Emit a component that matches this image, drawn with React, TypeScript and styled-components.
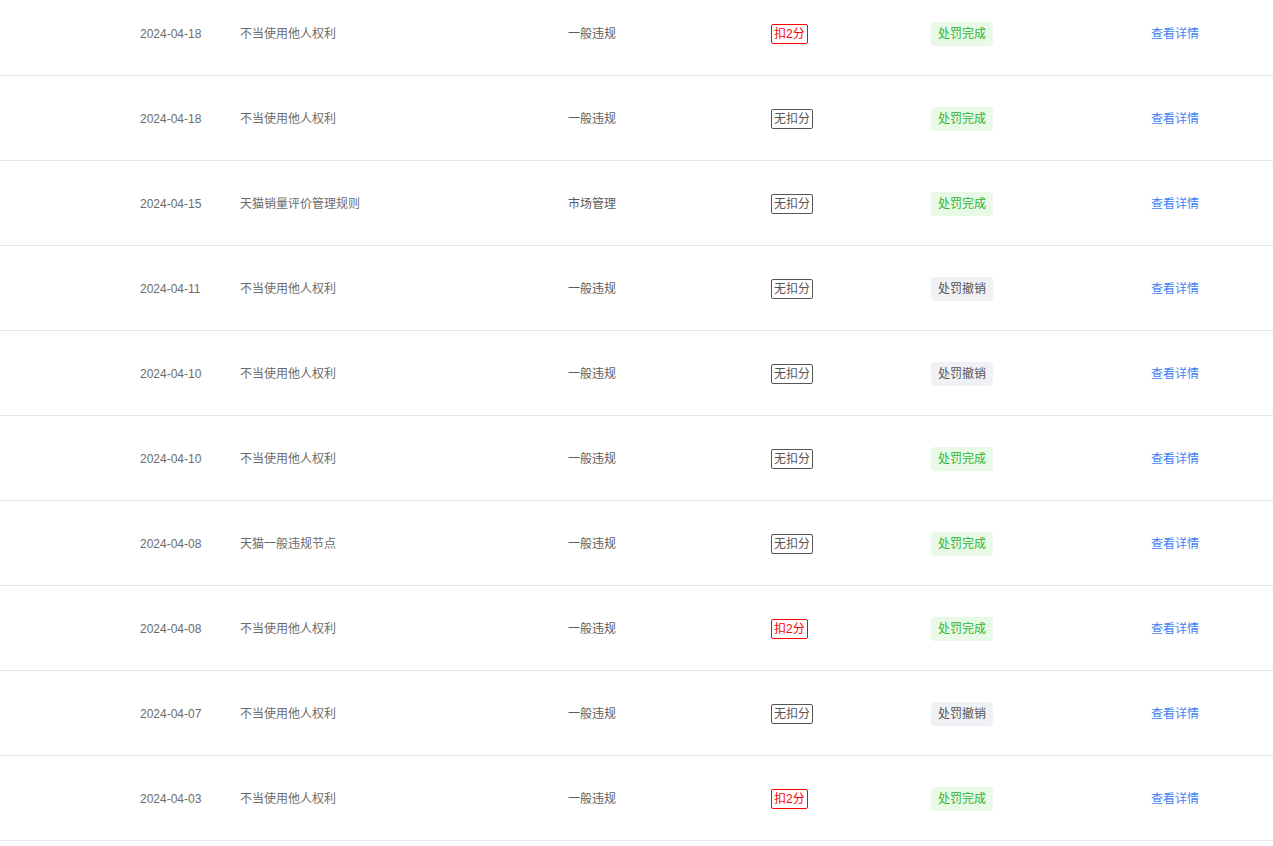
import styled, { createGlobalStyle } from "styled-components";

type Deduct = "none" | "two";
type Status = "done" | "revoked";

type RowT = {
  date: string;
  title: string;
  category: string;
  deduct: Deduct;
  status: Status;
};

const rows: Array<RowT> = [
  { date: "2024-04-18", title: "不当使用他人权利", category: "一般违规", deduct: "two", status: "done" },
  { date: "2024-04-18", title: "不当使用他人权利", category: "一般违规", deduct: "none", status: "done" },
  { date: "2024-04-15", title: "天猫销量评价管理规则", category: "市场管理", deduct: "none", status: "done" },
  { date: "2024-04-11", title: "不当使用他人权利", category: "一般违规", deduct: "none", status: "revoked" },
  { date: "2024-04-10", title: "不当使用他人权利", category: "一般违规", deduct: "none", status: "revoked" },
  { date: "2024-04-10", title: "不当使用他人权利", category: "一般违规", deduct: "none", status: "done" },
  { date: "2024-04-08", title: "天猫一般违规节点", category: "一般违规", deduct: "none", status: "done" },
  { date: "2024-04-08", title: "不当使用他人权利", category: "一般违规", deduct: "two", status: "done" },
  { date: "2024-04-07", title: "不当使用他人权利", category: "一般违规", deduct: "none", status: "revoked" },
  { date: "2024-04-03", title: "不当使用他人权利", category: "一般违规", deduct: "two", status: "done" },
];

const App = () => {
  return (
    <>
      <GlobalS />
      <ListS>
        {rows.map((row, index) => (
          <RowS key={index}>
            <CellS $tone="muted">{row.date}</CellS>
            <CellS $tone="muted">{row.title}</CellS>
            <CellS $tone="plain">{row.category}</CellS>
            <CellS $tone="plain">
              <DeductS $kind={row.deduct}>{row.deduct === "two" ? "扣2分" : "无扣分"}</DeductS>
            </CellS>
            <CellS $tone="plain">
              <StatusS $kind={row.status}>{row.status === "done" ? "处罚完成" : "处罚撤销"}</StatusS>
            </CellS>
            <CellS $tone="plain">
              <LinkS href="#">查看详情</LinkS>
            </CellS>
          </RowS>
        ))}
      </ListS>
    </>
  );
};

const GlobalS = createGlobalStyle`
  html, body {
    margin: 0;
    padding: 0;
    background: #fff;
    overflow: hidden;
  }
  body {
    font-family: "Liberation Sans", Arial, "Noto Sans CJK SC", sans-serif;
    font-size: 12px;
  }
`;

const ListS = styled.div`
  margin-top: -9px;
  width: 1273px;
`;

const RowS = styled.div`
  display: grid;
  grid-template-columns: 100px 328px 203px 160px 220px 1fr;
  align-items: center;
  box-sizing: border-box;
  height: 85px;
  padding: 1px 0 0 140px;
  border-bottom: 1px solid #e8e8e8;
`;

const CellS = styled.div<{ $tone: "muted" | "plain" }>`
  display: flex;
  align-items: center;
  font-size: 12px;
  line-height: 18px;
  color: ${({ $tone }) => ($tone === "muted" ? "#6b6b6b" : "#5c5c5c")};
  white-space: nowrap;
`;

const DeductS = styled.span<{ $kind: Deduct }>`
  display: inline-block;
  box-sizing: border-box;
  height: 20px;
  line-height: 18px;
  padding: 0 2px;
  border: 1px solid ${({ $kind }) => ($kind === "two" ? "#ff0000" : "#555")};
  border-radius: 2px;
  color: ${({ $kind }) => ($kind === "two" ? "#ff0000" : "#555")};
  font-size: 12px;
`;

const StatusS = styled.span<{ $kind: Status }>`
  display: inline-block;
  height: 24px;
  line-height: 24px;
  padding: 0 7px;
  border-radius: 4px;
  font-size: 12px;
  background: ${({ $kind }) => ($kind === "done" ? "#e8f9e6" : "#f0f1f4")};
  color: ${({ $kind }) => ($kind === "done" ? "#2bb53a" : "#555")};
`;

const LinkS = styled.a`
  color: #3d7ff5;
  text-decoration: none;
  font-size: 12px;
`;

export default App;
